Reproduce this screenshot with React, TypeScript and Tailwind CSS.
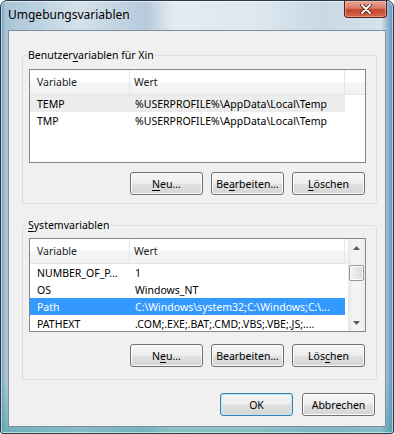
import { ReactNode } from "react";

type Row = { name: string; value: string };

const userRows: Row[] = [
  { name: "TEMP", value: "%USERPROFILE%\\AppData\\Local\\Temp" },
  { name: "TMP", value: "%USERPROFILE%\\AppData\\Local\\Temp" },
];

const systemRows: Row[] = [
  { name: "NUMBER_OF_P...", value: "1" },
  { name: "OS", value: "Windows_NT" },
  { name: "Path", value: "C:\\Windows\\system32;C:\\Windows;C:\\..." },
  { name: "PATHEXT", value: ".COM;.EXE;.BAT;.CMD;.VBS;.VBE;.JS;...." },
];

function Key({ children }: { children: ReactNode }) {
  return <span className="underline underline-offset-[2px]">{children}</span>;
}

function Btn({ children, primary }: { children: ReactNode; primary?: boolean }) {
  return (
    <button
      className={
        "flex h-[23px] w-[73px] items-center justify-center rounded-[3px] border text-[10.5px] text-black bg-[linear-gradient(to_bottom,#f5f5f5_0%,#eeeeee_48%,#e0e0e0_52%,#d5d5d5_100%)] " +
        (primary
          ? "border-[#3c7fb1] shadow-[inset_0_0_0_1px_#bfe6f7]"
          : "border-[#707070] shadow-[inset_0_0_0_1px_#fbfbfb]")
      }
    >
      {children}
    </button>
  );
}

function Scrollbar() {
  return (
    <div className="flex w-[17px] flex-col items-center bg-[linear-gradient(to_right,#e6e6e6,#f4f4f4_30%,#f4f4f4_70%,#ebebeb)]">
      {/* up arrow */}
      <div className="flex h-[17px] w-full items-center justify-center">
        <svg width="7" height="4" viewBox="0 0 7 4">
          <path d="M0 4 L3.5 0 L7 4 Z" fill="#5a5a5a" />
        </svg>
      </div>
      <div className="h-[9px]" />
      {/* thumb */}
      <div className="h-[16px] w-[15px] rounded-[2px] border border-[#959595] bg-[linear-gradient(to_right,#f3f3f3,#e8e8e8_50%,#d8d8d8)] shadow-[inset_0_0_0_1px_#fdfdfd]" />
      <div className="flex-1" />
      <div className="flex h-[17px] w-full items-center justify-center">
        <svg width="7" height="4" viewBox="0 0 7 4">
          <path d="M0 0 L7 0 L3.5 4 Z" fill="#5a5a5a" />
        </svg>
      </div>
    </div>
  );
}

function ListView({
  rows,
  selected,
  inactive,
  scroll,
}: {
  rows: Row[];
  selected?: number;
  inactive?: number;
  scroll?: boolean;
}) {
  return (
    <div className="flex h-[94px] w-[337px] overflow-hidden border border-[#828790] bg-white">
      <div className="flex-1 overflow-hidden">
        {/* Header */}
        <div className="flex h-[25px] items-stretch border-b border-[#e5e5e5] bg-[linear-gradient(to_bottom,#ffffff_0%,#ffffff_45%,#f4f5f7_55%,#f1f2f4_100%)] text-[#1e1e1e]">
          <div className="flex w-[100px] items-center border-r border-[#e3e5e8] pl-[7px]">Variable</div>
          <div className="flex w-[215px] items-center border-r border-[#e3e5e8] pl-[4px]">Wert</div>
          <div className="flex-1" />
        </div>

        {/* Rows */}
        {rows.map((r, i) => (
          <div
            key={r.name}
            className={
              "flex h-[17px] w-[315px] items-center whitespace-nowrap " +
              (i === selected
                ? "bg-[#3399ff] text-white"
                : i === inactive
                ? "bg-[#ececec] text-black"
                : "text-black")
            }
          >
            <div className="w-[100px] overflow-hidden pl-[7px]">{r.name}</div>
            <div className="w-[215px] overflow-hidden pl-[5px]">{r.value}</div>
          </div>
        ))}
      </div>
      {scroll && <Scrollbar />}
    </div>
  );
}

export default function App() {
  return (
    <div className="h-[434px] w-[394px] bg-white">
      <div className="flex h-[434px] w-[394px] flex-col overflow-hidden rounded-t-[7px] rounded-b-[3px] border border-[#2a3947] bg-[linear-gradient(to_bottom,rgba(0,0,0,0)_0%,rgba(0,0,0,0)_88%,rgba(70,160,165,0.6)_100%),linear-gradient(to_bottom,rgba(0,0,0,0)_0%,rgba(0,0,0,0)_10%,rgba(0,0,0,0)_100%),linear-gradient(to_right,#6f9fbf_0%,#a9c6d8_1.2%,#d4e1eb_20%,#b6cadb_37%,#e4ecf2_44%,#dde7ee_66%,#c8d8e5_82%,#d6e2eb_97%,#5f8fbd_100%)] font-['Noto_Sans',sans-serif] text-[10.5px] leading-[16px] shadow-[inset_0_0_0_1px_rgba(255,255,255,0.55)]">
        {/* Title bar */}
        <div className="flex h-[29px] items-start justify-between">
          <div className="pl-[7px] pt-[6px] text-[12px] text-black">Umgebungsvariablen</div>
          <div className="mr-[6px] flex h-[17px] w-[43px] items-center justify-center rounded-b-[4px] border border-t-0 border-[#5a1f14] bg-[linear-gradient(to_bottom,#e9a899_0%,#d97a63_45%,#c4452c_55%,#d26a4b_100%)] shadow-[inset_0_0_0_1px_rgba(255,200,180,0.5)]">
            <svg width="12" height="10" viewBox="0 0 12 10">
              <path d="M2 1 L10 9 M10 1 L2 9" stroke="#4a1a10" strokeWidth="3.6" strokeLinecap="round" />
              <path d="M2 1 L10 9 M10 1 L2 9" stroke="#ffffff" strokeWidth="2" strokeLinecap="round" />
            </svg>
          </div>
        </div>

        {/* Client area */}
        <div className="mx-[7px] flex h-[397px] flex-col border border-[#7c8d9c] bg-[#f0f0f0]">
          {/* User variables */}
          <fieldset className="ml-[13px] mt-[16px] w-[355px] rounded-[3px] border border-[#d5dfe5] pb-[8px] pl-[6px] pt-[6px]">
            <legend className="-ml-[2px] px-[1px] text-black">
              Benutzer<Key>v</Key>ariablen für Xin
            </legend>
            <ListView rows={userRows} inactive={0} />
            <div className="mt-[9px] flex w-[337px] justify-end gap-[8px] pr-[1px]">
              <Btn>
                <Key>N</Key>eu...
              </Btn>
              <Btn>
                Be<Key>a</Key>rbeiten...
              </Btn>
              <Btn>
                <Key>L</Key>öschen
              </Btn>
            </div>
          </fieldset>

          {/* System variables */}
          <fieldset className="ml-[13px] mt-[13px] w-[355px] rounded-[3px] border border-[#d5dfe5] pb-[12px] pl-[6px] pt-[5px]">
            <legend className="-ml-[2px] px-[1px] text-black">
              <Key>S</Key>ystemvariablen
            </legend>
            <ListView rows={systemRows} selected={2} scroll />
            <div className="mt-[12px] flex w-[337px] justify-end gap-[8px] pr-[1px]">
              <Btn>
                N<Key>e</Key>u...
              </Btn>
              <Btn>Bearbeiten...</Btn>
              <Btn>
                Lös<Key>c</Key>hen
              </Btn>
            </div>
          </fieldset>

          {/* Dialog buttons */}
          <div className="mr-[10px] mt-[13px] flex justify-end gap-[9px]">
            <Btn primary>OK</Btn>
            <Btn>Abbrechen</Btn>
          </div>
        </div>
      </div>
    </div>
  );
}
